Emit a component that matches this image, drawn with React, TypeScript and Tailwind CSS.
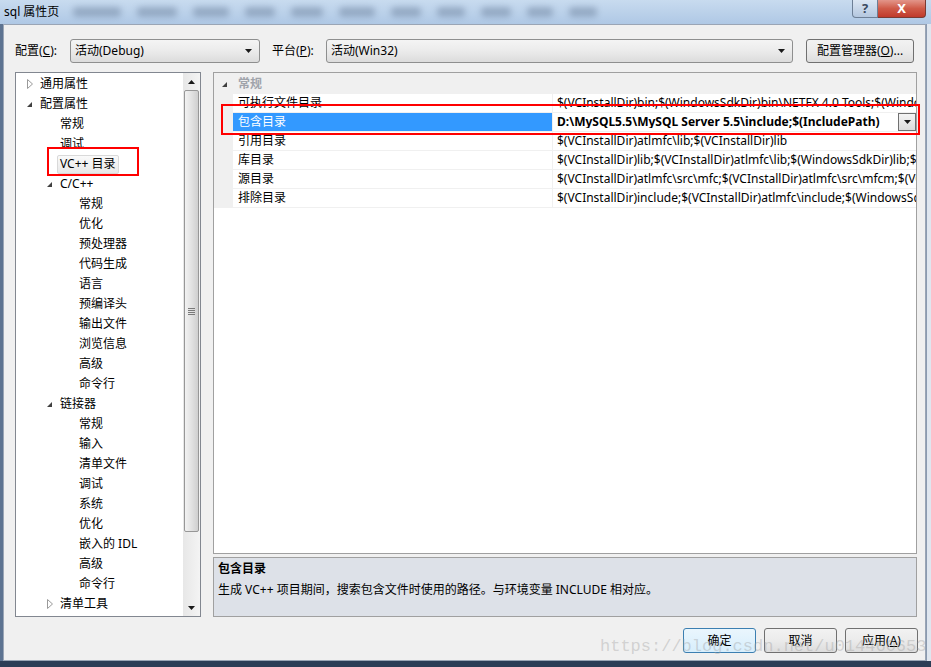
import React from 'react';

type Node = { t: string; lvl: 0 | 1 | 2; tri?: 'open' | 'closed'; sel?: boolean };

const tree: Node[] = [
  { t: '通用属性', lvl: 0, tri: 'closed' },
  { t: '配置属性', lvl: 0, tri: 'open' },
  { t: '常规', lvl: 1 },
  { t: '调试', lvl: 1 },
  { t: 'VC++ 目录', lvl: 1, sel: true },
  { t: 'C/C++', lvl: 1, tri: 'open' },
  { t: '常规', lvl: 2 },
  { t: '优化', lvl: 2 },
  { t: '预处理器', lvl: 2 },
  { t: '代码生成', lvl: 2 },
  { t: '语言', lvl: 2 },
  { t: '预编译头', lvl: 2 },
  { t: '输出文件', lvl: 2 },
  { t: '浏览信息', lvl: 2 },
  { t: '高级', lvl: 2 },
  { t: '命令行', lvl: 2 },
  { t: '链接器', lvl: 1, tri: 'open' },
  { t: '常规', lvl: 2 },
  { t: '输入', lvl: 2 },
  { t: '清单文件', lvl: 2 },
  { t: '调试', lvl: 2 },
  { t: '系统', lvl: 2 },
  { t: '优化', lvl: 2 },
  { t: '嵌入的 IDL', lvl: 2 },
  { t: '高级', lvl: 2 },
  { t: '命令行', lvl: 2 },
  { t: '清单工具', lvl: 1, tri: 'closed' },
];

const rows = [
  { name: '可执行文件目录', value: '$(VCInstallDir)bin;$(WindowsSdkDir)bin\\NETFX 4.0 Tools;$(WindowsSdkDir)bin;$(VSInstallDir)Common7\\Tools\\bin' },
  { name: '包含目录', value: 'D:\\MySQL5.5\\MySQL Server 5.5\\include;$(IncludePath)', sel: true },
  { name: '引用目录', value: '$(VCInstallDir)atlmfc\\lib;$(VCInstallDir)lib' },
  { name: '库目录', value: '$(VCInstallDir)lib;$(VCInstallDir)atlmfc\\lib;$(WindowsSdkDir)lib;$(FrameworkSDKDir)\\lib' },
  { name: '源目录', value: '$(VCInstallDir)atlmfc\\src\\mfc;$(VCInstallDir)atlmfc\\src\\mfcm;$(VCInstallDir)atlmfc\\src\\atl;$(VCInstallDir)crt\\src' },
  { name: '排除目录', value: '$(VCInstallDir)include;$(VCInstallDir)atlmfc\\include;$(WindowsSdkDir)include;$(FrameworkSDKDir)\\include' },
];

const blurs = [48, 40, 36, 30, 32, 36, 30, 28, 30, 26, 28];

const Down = () => (
  <svg width="7" height="4" viewBox="0 0 7 4">
    <path d="M0 0 L7 0 L3.5 4 Z" fill="#1a1a1a" />
  </svg>
);

const Tri = ({ kind }: { kind?: 'open' | 'closed' }) => (
  <span className="w-[13px] flex items-center">
    {kind === 'open' && (
      <svg width="5" height="5" viewBox="0 0 5 5">
        <path d="M5 0 L5 5 L0 5 Z" fill="#404040" />
      </svg>
    )}
    {kind === 'closed' && (
      <svg width="6" height="10" viewBox="0 0 6 10">
        <path d="M0.5 0.5 L5.5 5 L0.5 9.5 Z" fill="none" stroke="#9a9a9a" />
      </svg>
    )}
  </span>
);

const Combo = ({ text, w }: { text: string; w: string }) => (
  <div className={`${w} h-[24px] flex items-center justify-between pl-[4px] pr-[7px] border border-[#8e8f8f] rounded-[3px] bg-gradient-to-b from-[#f4f4f4] via-[#ebebeb] to-[#dcdcdc]`}>
    <span>{text}</span>
    <Down />
  </div>
);

const Btn = ({ children, focus }: { children: React.ReactNode; focus?: boolean }) => (
  <div
    className={`w-[73px] h-[25px] flex items-center justify-center rounded-[3px] border ${
      focus
        ? 'border-[#3c7fb1] bg-gradient-to-b from-[#eaf6fd] to-[#d7eefc]'
        : 'border-[#707070] bg-gradient-to-b from-[#f2f2f2] via-[#ebebeb] to-[#dddddd]'
    }`}
  >
    {children}
  </div>
);

export default function App() {
  return (
    <div className="relative w-[931px] h-[667px] overflow-hidden flex flex-col bg-[#2c3d56] text-[12px] text-black font-['Noto_Sans','Noto_Sans_CJK_SC',sans-serif] leading-none">
      {/* title bar */}
      <div className="h-[24px] flex items-start justify-between bg-gradient-to-b from-[#c8dbef] to-[#afc8e5]">
        <div className="flex items-center h-[24px]">
          <span className="pl-[4px] pr-[14px]">sql 属性页</span>
          <div className="flex items-center gap-[16px] opacity-40">
            {blurs.map((w, i) => (
              <div key={i} className="h-[10px] bg-[#5a6f8c] rounded-sm blur-[3px]" style={{ width: w }} />
            ))}
          </div>
        </div>
        <div className="flex mr-[5px]">
          <div className="w-[26px] h-[18px] flex items-center justify-center rounded-bl-[4px] border border-t-0 border-[#6d7f96] bg-gradient-to-b from-[#dbe6f3] to-[#b4c7df] text-[#3a4a60] font-bold text-[13px]">?</div>
          <div className="w-[48px] h-[18px] flex items-center justify-center rounded-br-[4px] border border-t-0 border-l-0 border-[#7a3a33] bg-gradient-to-b from-[#e2958a] via-[#cf5a48] to-[#c0392b] text-white font-bold text-[13px]">X</div>
        </div>
      </div>

      <div className="flex flex-1">
        <div className="w-[3px] bg-[#5d7391]" />
        {/* client */}
        <div className="w-[923px] bg-[#f0f0f0] border border-[#9aa5b5] flex flex-col pl-[11px] pt-[14px]">
          <div className="flex items-center h-[24px]">
            <span className="w-[55px]">配置(<u>C</u>):</span>
            <Combo text="活动(Debug)" w="w-[190px]" />
            <span className="w-[54px] ml-[12px]">平台(<u>P</u>):</span>
            <Combo text="活动(Win32)" w="w-[467px]" />
            <div className="ml-[13px] w-[108px] h-[24px] flex items-center justify-center border border-[#707070] rounded-[3px] bg-gradient-to-b from-[#f2f2f2] via-[#ebebeb] to-[#dddddd]">
              配置管理器(<u>O</u>)...
            </div>
          </div>

          <div className="flex mt-[9px] h-[545px]">
            {/* tree */}
            <div className="w-[186px] h-[545px] border border-[#828790] bg-white flex">
              <div className="flex-1 flex flex-col pt-[1px]">
                {tree.map((n, i) => (
                  <div
                    key={i}
                    className={`h-[20px] flex items-center ${n.lvl === 0 ? 'pl-[11px]' : n.lvl === 1 ? 'pl-[31px]' : 'pl-[50px]'}`}
                  >
                    <Tri kind={n.tri} />
                    {n.sel ? (
                      <span className="-ml-[3px] h-[19px] px-[2px] flex items-center border border-[#d9d9d9] rounded-[2px] bg-gradient-to-b from-[#fafafa] to-[#e8e8e8]">
                        {n.t}
                      </span>
                    ) : (
                      <span>{n.t}</span>
                    )}
                  </div>
                ))}
              </div>
              {/* scrollbar */}
              <div className="w-[17px] flex flex-col bg-gradient-to-r from-[#e7e7e7] to-[#f4f4f4]">
                <div className="h-[17px] flex items-center justify-center">
                  <svg width="7" height="4" viewBox="0 0 7 4"><path d="M0 4 L7 4 L3.5 0 Z" fill="#1a1a1a" /></svg>
                </div>
                <div className="h-[442px] mx-[1px] border border-[#979797] rounded-[2px] bg-gradient-to-r from-[#f2f2f2] via-[#e2e2e2] to-[#cfcfcf] flex items-center justify-center">
                  <div className="flex flex-col gap-[1px]">
                    <div className="w-[7px] h-[1px] bg-[#7a7a7a]" />
                    <div className="w-[7px] h-[1px] bg-[#7a7a7a]" />
                    <div className="w-[7px] h-[1px] bg-[#7a7a7a]" />
                    <div className="w-[7px] h-[1px] bg-[#7a7a7a]" />
                  </div>
                </div>
                <div className="flex-1" />
                <div className="h-[17px] flex items-center justify-center">
                  <Down />
                </div>
              </div>
            </div>

            {/* property grid + description */}
            <div className="ml-[12px] w-[704px] flex flex-col">
              <div className="h-[483px] border border-[#a0a0a0] bg-white flex flex-col">
                <div className="h-[21px] flex items-center bg-[#f0f0f0] pt-[1px]">
                  <span className="w-[24px] pl-[8px] flex items-center">
                    <svg width="5" height="5" viewBox="0 0 5 5"><path d="M5 0 L5 5 L0 5 Z" fill="#404040" /></svg>
                  </span>
                  <span className="text-[#a0a4ab] font-bold">常规</span>
                </div>
                {rows.map((r, i) => (
                  <div key={i} className="h-[19px] flex border-b border-[#f0f0f0]">
                    <div className="w-[19px] bg-[#f0f0f0]" />
                    <div className={`w-[320px] flex items-center pl-[5px] border-r border-[#f0f0f0] ${r.sel ? 'bg-[#3399ff] text-white' : ''}`}>
                      {r.name}
                    </div>
                    <div className="flex-1 flex items-center pl-[4px] overflow-hidden whitespace-nowrap">
                      {r.sel ? (
                        <>
                          <span className="flex-1 font-bold overflow-hidden">{r.value}</span>
                          <div className="w-[18px] h-[18px] flex items-center justify-center border border-[#707070] bg-gradient-to-b from-[#f4f4f4] to-[#dcdcdc]">
                            <Down />
                          </div>
                        </>
                      ) : (
                        <span>{r.value}</span>
                      )}
                    </div>
                  </div>
                ))}
              </div>
              <div className="mt-[3px] h-[60px] border border-[#a0a0a0] bg-[#dde1e8] pl-[4px] pt-[5px] flex flex-col gap-[9px]">
                <span className="font-bold">包含目录</span>
                <span>生成 VC++ 项目期间，搜索包含文件时使用的路径。与环境变量 INCLUDE 相对应。</span>
              </div>
            </div>
          </div>

          <div className="mt-[11px] h-[25px] flex justify-end gap-[8px] pr-[7px]">
            <Btn focus>确定</Btn>
            <Btn>取消</Btn>
            <Btn>应用(<u>A</u>)</Btn>
          </div>
        </div>
        <div className="w-[5px] bg-[#dfe6ef] border-l border-[#8a9ab0]" />
      </div>
      <div className="h-[6px] bg-[#2c3d56]" />

      {/* annotations */}
      <div className="absolute left-[47px] top-[147px] w-[92px] h-[29px] border-2 border-[#ff0000]" />
      <div className="absolute left-[221px] top-[104px] w-[699px] h-[31px] border-2 border-[#ff0000]" />
      <div className="absolute left-[600px] top-[638px] whitespace-nowrap text-[17px] text-[#a0a0a0]/40 font-['Liberation_Mono',monospace]">
        https://blog.csdn.net/u014460653
      </div>
    </div>
  );
}
